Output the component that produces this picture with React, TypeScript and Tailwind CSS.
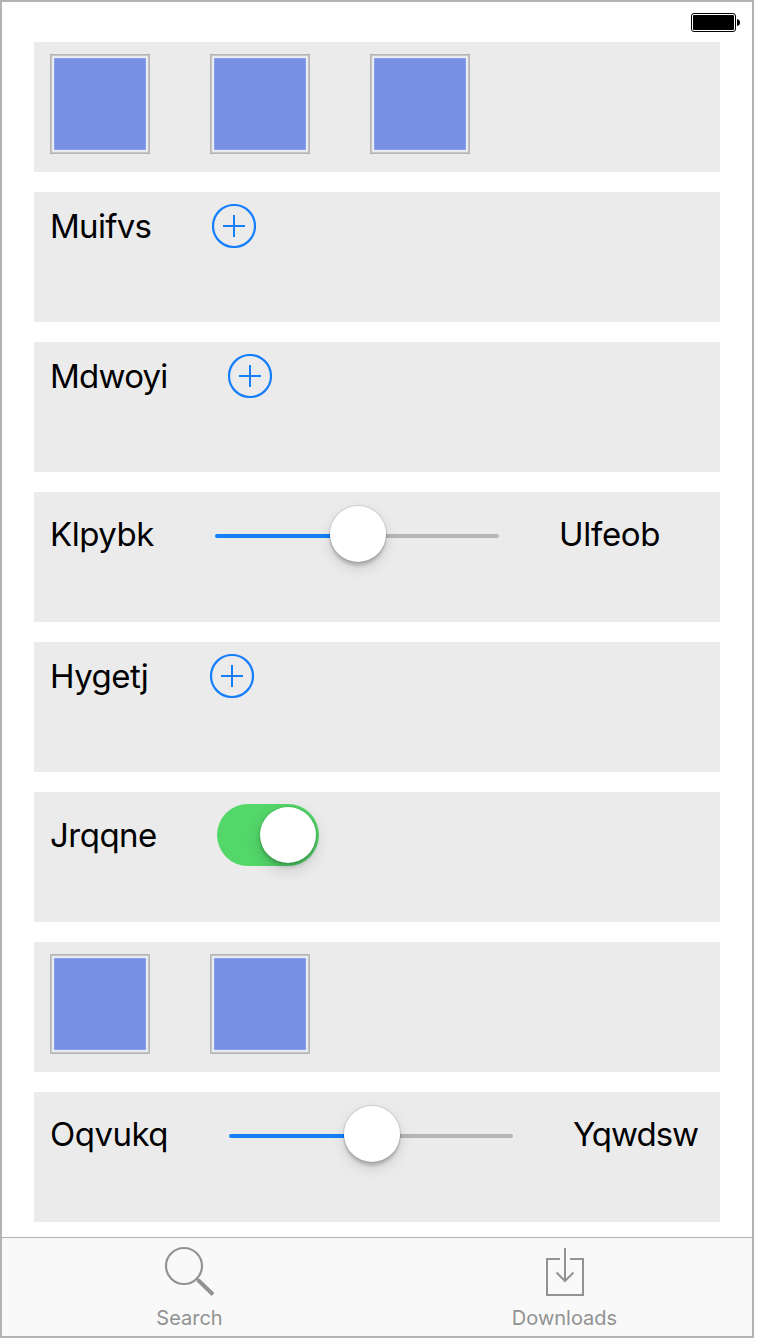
import React from "react";

function Card({ children }: { children: React.ReactNode }) {
  return <section className="flex h-[130px] items-start bg-[#ebebeb] px-4 pt-3">{children}</section>;
}

function Tile() {
  return (
    <div className="mr-[60px] size-[100px] border border-[#b5b5b5] bg-[#7790e2] shadow-[inset_0_0_0_1px_#c6c6c6,inset_0_0_0_2px_#e8e9ee,inset_0_0_0_3px_#e9edfb,inset_0_0_0_4px_#899fe6]" />
  );
}

function Label({ text, className }: { text: string; className: string }) {
  return (
    <span className={`block shrink-0 whitespace-nowrap text-[33px] leading-[44px] text-black ${className}`}>{text}</span>
  );
}

function AddButton() {
  return (
    <button aria-label="Add" className="size-11">
      <svg viewBox="0 0 44 44" className="size-11" fill="none" stroke="#157efb" strokeWidth="2">
        <circle cx="22" cy="22" r="21" strokeWidth="2.2" />
        <path d="M22 11v22M11 22h22" />
      </svg>
    </button>
  );
}

function Slider() {
  return (
    <div className="flex h-[60px] w-[284px] shrink-0 items-center">
      <div className="mt-1 h-1 w-[115px] rounded-l-full bg-[#157efb]" />
      <div className="z-10 size-14 rounded-full bg-white shadow-[0_0_1px_1px_rgba(0,0,0,0.1),0_6px_14px_rgba(0,0,0,0.13),0_4px_3px_rgba(0,0,0,0.16)]" />
      <div className="mt-1 h-1 flex-1 rounded-r-full bg-[#b5b5b5]" />
    </div>
  );
}

function Toggle() {
  return (
    <div className="flex h-[62px] w-[102px] items-center justify-end rounded-full bg-[#53d769] pr-[3px]">
      <div className="size-14 rounded-full bg-white shadow-[0_0_1px_1px_rgba(0,0,0,0.08),0_6px_16px_rgba(0,0,0,0.16),0_4px_4px_rgba(0,0,0,0.15)]" />
    </div>
  );
}

function SearchIcon() {
  return (
    <svg viewBox="0 0 52 52" className="mr-[2px] size-[52px]" fill="none" stroke="#929292">
      <circle cx="21" cy="21" r="18" strokeWidth="2.2" />
      <path d="M33 33l4 4" strokeWidth="2.4" />
      <path d="M35 35L50 49.5" strokeWidth="4" />
    </svg>
  );
}

function DownloadIcon() {
  return (
    <svg viewBox="0 0 52 52" className="size-[52px]" fill="none" stroke="#929292" strokeWidth="2">
      <path d="M21 14H8v36h36V14H31" />
      <path d="M26 3v33M17.5 27.5l8.5 8.5 8.5-8.5" />
    </svg>
  );
}

export default function App() {
  return (
    <div className="min-h-[1340px] bg-white font-[Inter,sans-serif]">
      <div className="flex h-[1338px] w-[754px] flex-col border-2 border-[#b3b3b3] bg-white">
        <header className="flex h-10 shrink-0 items-start justify-end pt-[11px] pr-3">
          <svg viewBox="0 0 49 19" className="h-[19px] w-[49px]">
            <rect x="0.5" y="0.5" width="44" height="18" rx="2.5" fill="none" stroke="#000" />
            <rect x="2" y="2" width="41" height="15" rx="1" fill="#000" />
            <path d="M46 6q3 .5 3 3.5t-3 3.5z" fill="#000" />
          </svg>
        </header>
        <main className="flex flex-1 flex-col gap-5 pr-8 pl-8">
          <Card><Tile /><Tile /><Tile /></Card>
          <Card><Label text="Muifvs" className="w-[162px] tracking-[-0.7px]" /><AddButton /></Card>
          <Card><Label text="Mdwoyi" className="w-[178px] tracking-[-0.75px]" /><AddButton /></Card>
          <Card>
            <Label text="Klpybk" className="mt-2 w-[165px] tracking-[-0.5px]" />
            <Slider />
            <Label text="Ulfeob" className="mt-2 ml-[60px] tracking-[-0.3px]" />
          </Card>
          <Card><Label text="Hygetj" className="w-[160px] tracking-[-0.5px]" /><AddButton /></Card>
          <Card><Label text="Jrqqne" className="mt-[9px] w-[167px] tracking-[-0.5px]" /><Toggle /></Card>
          <Card><Tile /><Tile /></Card>
          <Card>
            <Label text="Oqvukq" className="mt-2 w-[179px] tracking-[-0.5px]" />
            <Slider />
            <Label text="Yqwdsw" className="mt-2 ml-[60px] tracking-[-1px]" />
          </Card>
        </main>
        <nav className="grid h-[99px] shrink-0 grid-cols-2 border-t border-[#b2b2b2] bg-[#f9f9f9] text-[20px] leading-6 text-[#929292]">
          <div className="flex flex-col items-center pt-[7px]"><SearchIcon /><span className="mt-[9px]">Search</span></div>
          <div className="flex flex-col items-center pt-[7px]"><DownloadIcon /><span className="mt-[9px]">Downloads</span></div>
        </nav>
      </div>
    </div>
  );
}
